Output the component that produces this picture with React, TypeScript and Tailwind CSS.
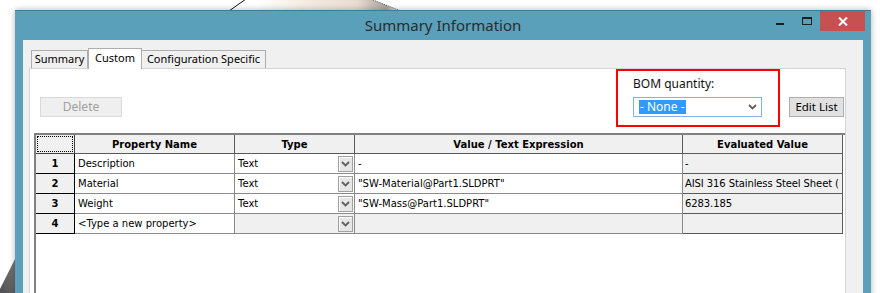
import React from 'react'

const ui = "font-['Noto_Sans',sans-serif]"
const grid = "font-['DejaVu_Sans',sans-serif] text-[10px]"

function Chevron({ className = '' }: { className?: string }) {
  return (
    <svg width="9" height="6" viewBox="0 0 9 6" className={className}>
      <path d="M1 1 L4.5 4.5 L8 1" fill="none" stroke="#606060" strokeWidth="1.8" />
    </svg>
  )
}

function CellButton() {
  return (
    <div className="mr-[1px] flex h-[16px] w-[15px] items-center justify-center border border-[#a0a0a0] bg-[#e6e6e6] shadow-[inset_1px_1px_0_#fff]">
      <Chevron />
    </div>
  )
}

type Row = { n: number; name: string; type: string; value: string; evald: string; blank?: boolean }

const rows: Row[] = [
  { n: 1, name: 'Description', type: 'Text', value: '-', evald: '-' },
  { n: 2, name: 'Material', type: 'Text', value: '"SW-Material@Part1.SLDPRT"', evald: 'AISI 316 Stainless Steel Sheet (' },
  { n: 3, name: 'Weight', type: 'Text', value: '"SW-Mass@Part1.SLDPRT"', evald: '6283.185' },
  { n: 4, name: '<Type a new property>', type: '', value: '', evald: '', blank: true },
]

export default function App() {
  return (
    <div className="relative h-[293px] w-[880px] overflow-hidden bg-white">
      {/* background bits behind the window */}
      <svg className="absolute left-[226px] top-0" width="24" height="12">
        <line x1="3" y1="11" x2="20" y2="-1" stroke="#111" strokeWidth="1" />
      </svg>
      <svg className="absolute left-[255px] top-0" width="150" height="11">
        <defs>
          <linearGradient id="beige" x1="0" x2="1" y1="0" y2="0">
            <stop offset="0" stopColor="#ffffff" />
            <stop offset="0.35" stopColor="#f5ebe0" />
            <stop offset="0.7" stopColor="#e8dccf" />
            <stop offset="0.9" stopColor="#aaa39b" />
            <stop offset="1" stopColor="#ffffff" />
          </linearGradient>
        </defs>
        <polygon points="0,11 6,0 118,0 146,11" fill="url(#beige)" />
        <line x1="118" y1="0" x2="146" y2="11" stroke="#555" strokeWidth="1" strokeDasharray="1 1" />
      </svg>
      <svg className="absolute bottom-0 left-0" width="16" height="40">
        <defs>
          <linearGradient id="shade" x1="0" x2="1" y1="1" y2="0">
            <stop offset="0" stopColor="#4f4f4f" />
            <stop offset="1" stopColor="#7a7a7a" />
          </linearGradient>
        </defs>
        <polygon points="0,40 0,36 16,4 16,40" fill="url(#shade)" />
      </svg>

      {/* window */}
      <div className={`relative ml-[15px] mt-[10px] flex h-[300px] w-[856px] flex-col border-t border-[#3f7d97] bg-[#5aa0bb] shadow-[0_0_6px_rgba(0,0,0,0.3)] ${ui}`}>
        {/* title bar */}
        <div className="grid h-[29px] grid-cols-[1fr_auto_1fr]">
          <div />
          <div className="self-center pb-[1px] text-[15px] text-[#2b2b2b]">Summary Information</div>
          <div className="flex items-start justify-end">
            <div className="mr-[18px] mt-[12px] h-[2px] w-[8px] bg-[#1e1e1e]" />
            <div className="mr-[8px] mt-[6px] h-[8px] w-[10px] border border-t-2 border-[#1e1e1e]" />
            <div className="mr-[6px] flex h-[20px] w-[45px] items-center justify-center bg-[#c75050]">
              <svg width="10" height="9" viewBox="0 0 10 9">
                <path d="M1 0.5 L9 8.5 M9 0.5 L1 8.5" stroke="#fff" strokeWidth="2" />
              </svg>
            </div>
          </div>
        </div>

        {/* client area */}
        <div className="mx-[8px] flex flex-1 flex-col bg-[#f0f0f0]">
          {/* tabs */}
          <div className="flex h-[28px] items-end pl-[8px] text-[11px] text-black">
            <div className="flex h-[18px] w-[57px] items-center justify-center border border-b-0 border-[#adadad] bg-[#f0f0f0]">
              Summary
            </div>
            <div className="relative z-10 -mb-[1px] flex h-[21px] w-[54px] items-start justify-center border border-b-0 border-[#adadad] bg-white pt-[1px]">
              Custom
            </div>
            <div className="flex h-[18px] w-[124px] items-center justify-center border border-b-0 border-l-0 border-[#adadad] bg-[#f0f0f0]">
              Configuration Specific
            </div>
          </div>

          {/* tab panel */}
          <div className="ml-[6px] flex w-[817px] flex-1 flex-col border border-b-0 border-[#d4d4d4] bg-white">
            <div className="flex h-[64px] items-start justify-between">
              <div className="ml-[10px] mt-[28px] flex h-[20px] w-[82px] items-center justify-center border border-[#d9d9d9] bg-[#efefef] text-[12px] text-[#a0a0a0]">
                Delete
              </div>
              <div className="mr-[1px] flex items-start">
                <div className="h-[58px] w-[164px] border-2 border-[#ff0000] pl-[15px] pt-[5px]">
                  <div className="h-[16px] text-[12px] leading-[16px] text-[#111]">BOM quantity:</div>
                  <div className="mt-[5px] flex h-[20px] w-[129px] items-center justify-between border border-[#7eb4ea] bg-white">
                    <span className="ml-[5px] bg-[#3399ff] px-[1px] text-[12px] leading-[14px] text-white">- None -</span>
                    <Chevron className="mr-[4px]" />
                  </div>
                </div>
                <div className="ml-[9px] mt-[28px] flex h-[20px] w-[55px] items-center justify-center border border-[#adadad] bg-[#e1e1e1] text-[11.5px] text-black">
                  Edit List
                </div>
              </div>
            </div>

            {/* property grid */}
            <div className={`ml-[4px] flex-1 border-l-2 border-t-2 border-[#808080] ${grid}`}>
              <div className="grid grid-cols-[39px_160px_120px_328px_160px] grid-rows-[19px_20px_20px_20px_20px]">
                <div className="border-b border-r border-[#404040] bg-[#f0f0f0] p-[1px]">
                  <div className="h-full w-full border border-dotted border-black" />
                </div>
                {['Property Name', 'Type', 'Value / Text Expression', 'Evaluated Value'].map((h) => (
                  <div
                    key={h}
                    className="flex items-center justify-center border-b border-r border-[#5a5a5a] bg-[#f0f0f0] font-bold text-black"
                  >
                    {h}
                  </div>
                ))}
                {rows.map((r) => (
                  <React.Fragment key={r.n}>
                    <div className="flex items-start justify-center border-b border-r border-black bg-[#f0f0f0] pt-[2px] font-bold text-black">
                      {r.n}
                    </div>
                    <div className="flex items-center overflow-hidden whitespace-nowrap border-b border-r border-[#8a8a8a] bg-white pl-[3px] text-black">
                      {r.name}
                    </div>
                    <div
                      className={`flex items-center justify-between border-b border-r border-[#8a8a8a] pl-[3px] text-black ${
                        r.blank ? 'bg-[#f0f0f0]' : 'bg-white'
                      }`}
                    >
                      <span>{r.type}</span>
                      <CellButton />
                    </div>
                    <div
                      className={`flex items-center overflow-hidden whitespace-nowrap border-b border-r border-[#8a8a8a] pl-[3px] text-black ${
                        r.blank ? 'bg-[#f0f0f0]' : 'bg-white'
                      }`}
                    >
                      {r.value}
                    </div>
                    <div className="flex items-center overflow-hidden whitespace-nowrap border-b border-r border-[#5a5a5a] bg-[#f0f0f0] pl-[2px] tracking-[-0.1px] text-black">
                      {r.evald}
                    </div>
                  </React.Fragment>
                ))}
              </div>
            </div>
          </div>
        </div>
      </div>
    </div>
  )
}
